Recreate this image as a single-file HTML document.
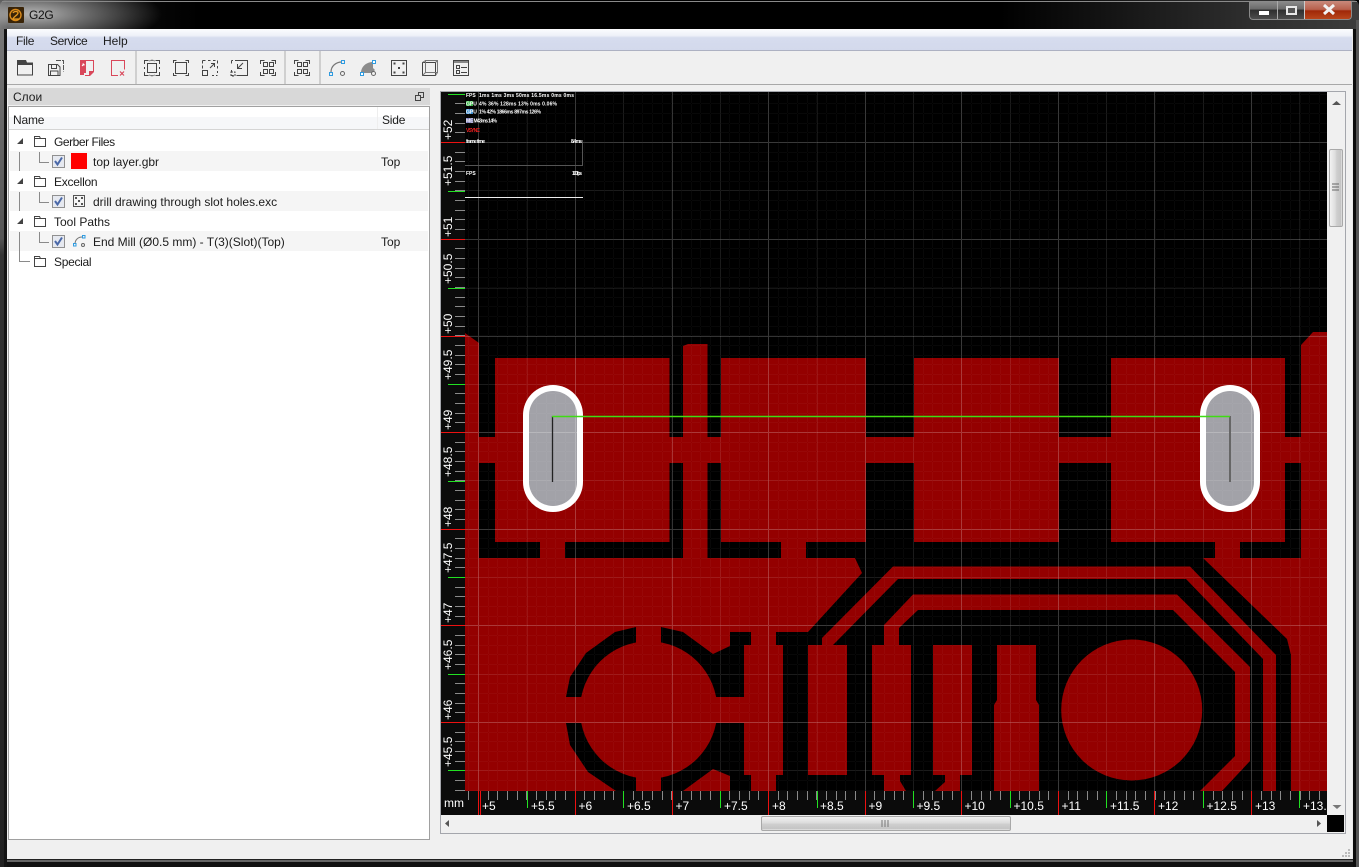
<!DOCTYPE html>
<html><head><meta charset="utf-8"><title>G2G</title>
<style>
html,body{margin:0;padding:0;width:1359px;height:867px;overflow:hidden;background:#000}
body{position:relative;font:12px "Liberation Sans","Noto Sans CJK SC",sans-serif;color:#1c1c1c}
.a{position:absolute}
.t{position:absolute;white-space:nowrap;line-height:14px}
.row{position:absolute;left:10px;width:418px;height:20px;background:#f5f5f5}
</style></head><body>
<div class="a" style="left:0;top:0;width:1359px;height:867px;border-radius:6px 6px 0 0;background:linear-gradient(90deg,#555 0,#2a2a2a 6px,#1a1a1a 7px,#000 200px,#000 1000px,#2e2e2e 1250px,#3c3c3c 1359px)"></div>
<div class="a" style="left:0;top:29px;width:7px;height:838px;background:linear-gradient(180deg,#777 0,#555 25%,#333 27%,#222 100%)"></div>
<div class="a" style="left:4px;top:29px;width:3px;height:838px;background:#141414"></div>
<div class="a" style="left:0;top:0;width:230px;height:29px;background:radial-gradient(ellipse 130px 34px at 32px 14px,rgba(190,190,190,.95) 0,rgba(140,140,140,.75) 40%,rgba(0,0,0,0) 100%)"></div>
<div class="a" style="left:2px;top:1px;width:1355px;height:1px;background:#8a8a8a"></div>
<div class="a" style="left:8px;top:7px;width:16px;height:16px;background:#3a2408;border-radius:1px"></div>
<svg class="a" style="left:8px;top:7px" width="16" height="16"><circle cx="7.500" cy="8" r="5.500" fill="none" stroke="#d98a1c" stroke-width="1.400"/><path d="M5 6c1-2 5-2 5 0 0 2-5 4-5 6h6" fill="none" stroke="#e89a20" stroke-width="1.300"/></svg>
<div class="t" style="left:29px;top:8px;font-size:12px;color:#111;letter-spacing:-.3px">G2G</div>

<!-- caption buttons -->
<div class="a" style="left:1249px;top:1px;width:103px;height:19px;border:1px solid #8a8a8a;border-top:0;border-radius:0 0 4px 4px;box-sizing:border-box;overflow:hidden;background:linear-gradient(180deg,#8d8d8d 0,#6a6a6a 45%,#2f2f2f 50%,#4d4d4d 100%)">
<div class="a" style="left:27px;top:0;width:1px;height:19px;background:#aaa"></div>
<div class="a" style="left:54px;top:0;width:48px;height:19px;border-left:1px solid #ccc;background:linear-gradient(180deg,#c98a7c 0,#b8604c 45%,#a02808 52%,#bc4a1e 100%)"></div>
<div class="a" style="left:9px;top:10px;width:10px;height:4px;background:#fff"></div>
<div class="a" style="left:36px;top:5px;width:11px;height:9px;border:2px solid #e8e8e8;box-sizing:border-box;background:#555"></div>
<svg class="a" style="left:72px;top:3px" width="14" height="12"><path d="M2 1l10 9M12 1L2 10" stroke="#f2f2f2" stroke-width="3" fill="none"/></svg>
</div>

<!-- client -->
<div class="a" style="left:7px;top:29px;width:1345px;height:830px;background:#f0f0f0"></div>
<div class="a" style="left:1352px;top:29px;width:1px;height:831px;background:#e8e8e8"></div>
<div class="a" style="left:1353px;top:29px;width:3px;height:838px;background:#0c0c0c"></div>
<div class="a" style="left:1356px;top:20px;width:3px;height:847px;background:#555"></div>
<div class="a" style="left:7px;top:859px;width:1346px;height:1px;background:#222"></div>
<div class="a" style="left:7px;top:860px;width:1346px;height:2px;background:#666"></div>
<div class="a" style="left:7px;top:862px;width:1346px;height:5px;background:#111"></div>

<!-- menu -->
<div class="a" style="left:7px;top:29px;width:1345px;height:22px;background:linear-gradient(180deg,#fbfcfe 0,#eef1f8 30%,#d6dcee 40%,#d3d9ec 95%,#adb1c2 96%)"></div>
<div class="t" style="left:16px;top:34px;letter-spacing:-.3px">File</div>
<div class="t" style="left:50px;top:34px;letter-spacing:-.4px">Service</div>
<div class="t" style="left:103px;top:34px">Help</div>

<!-- toolbar -->
<div class="a" style="left:7px;top:84px;width:1345px;height:1px;background:#a8a8a8"></div>
<div class="a" style="left:135px;top:51px;width:2px;height:33px;background:#cfcfcf"></div>
<div class="a" style="left:284px;top:51px;width:2px;height:33px;background:#cfcfcf"></div>
<div class="a" style="left:319px;top:51px;width:2px;height:33px;background:#cfcfcf"></div>

<!-- dock -->
<div class="a" style="left:8px;top:88px;width:422px;height:17px;background:#d8d8d8"></div>
<div class="t" style="left:13px;top:90px">Слои</div>
<div class="a" style="left:8px;top:106px;width:420px;height:732px;background:#fff;border:1px solid #a0a0a0"></div>
<div class="a" style="left:9px;top:117px;width:420px;height:12px;background:#f6f7f9"></div>
<div class="a" style="left:9px;top:129px;width:420px;height:1px;background:#d5d5d5"></div>
<div class="a" style="left:377px;top:107px;width:1px;height:22px;background:#eeeeee"></div>
<div class="t" style="left:13px;top:113px;letter-spacing:-.2px">Name</div>
<div class="t" style="left:382px;top:113px;letter-spacing:-.2px">Side</div>
<div class="row" style="top:151px"></div>
<div class="row" style="top:191px"></div>
<div class="row" style="top:231px"></div>
<div class="t" style="left:54px;top:135px;letter-spacing:-.45px">Gerber Files</div>
<div class="t" style="left:93px;top:155px">top layer.gbr</div>
<div class="t" style="left:381px;top:155px">Top</div>
<div class="t" style="left:54px;top:175px;letter-spacing:-.25px">Excellon</div>
<div class="t" style="left:93px;top:195px">drill drawing through slot holes.exc</div>
<div class="t" style="left:54px;top:215px">Tool Paths</div>
<div class="t" style="left:93px;top:235px">End Mill (Ø0.5 mm) - T(3)(Slot)(Top)</div>
<div class="t" style="left:381px;top:235px">Top</div>
<div class="t" style="left:54px;top:255px;letter-spacing:-.3px">Special</div>

<!-- canvas frame -->
<div class="a" style="left:440px;top:91px;width:904px;height:741px;border:1px solid #a4a6ac;background:#f0f0f0"></div>
<div class="a" style="left:441px;top:92px;width:886px;height:723px;overflow:hidden;background:#000">
<svg width="886" height="723" viewBox="441 92 886 723" style="display:block" font-family="Liberation Sans, sans-serif">
<defs>
<pattern id="fine" x="478" y="142" width="29" height="29" patternUnits="userSpaceOnUse"><path d="M0 0h1v29H0zM10 0h1v29h-1zM19 0h1v29h-1zM0 0v1h29V0zM0 10v1h29v-1zM0 19v1h29v-1z" fill="#fff" fill-opacity=".03"/></pattern>
<pattern id="tx" x="478" y="791" width="29" height="9" patternUnits="userSpaceOnUse"><path d="M0 0h1v9H0zM10 0h1v9h-1zM19 0h1v9h-1z" fill="#8a8a8a"/></pattern>
<pattern id="ty" x="455" y="142" width="10" height="29" patternUnits="userSpaceOnUse"><path d="M0 0h10v1H0zM0 10h10v1H0zM0 19h10v1H0z" fill="#8a8a8a"/></pattern>
</defs>
<rect x="441" y="92" width="886" height="723" fill="#000"/>
<g fill="#940000">
<path d="M465 333L479 343V558H465z"/>
<rect x="495" y="358" width="174.500" height="184"/>
<rect x="721" y="358" width="145" height="184"/>
<rect x="914" y="358" width="145" height="184"/>
<rect x="1111" y="358" width="174" height="184"/>
<path d="M683 346L688 344H707.500V558H683z"/>
<rect x="479" y="437" width="16" height="26"/>
<rect x="669" y="437" width="52" height="26"/>
<rect x="866" y="437" width="48" height="26"/>
<rect x="1059" y="437" width="52" height="26"/>
<rect x="1285" y="437" width="16" height="26"/>
<rect x="540" y="542" width="25" height="16"/>
<rect x="781" y="542" width="25" height="16"/>
<rect x="1215" y="542" width="25" height="16"/>
<path d="M1301 345L1313 332H1327V558H1301z"/>
<path d="M465 558H855L862 573L808 632H776V645H783V775H776V791H465z"/>
<path d="M1203 558H1327V791H1291V655L1287 639z"/>
<path d="M893 566.500H1190L1276 655V791H1263V659L1186 579H898L833 645H822V638z"/>
<path d="M913 594.500H1177L1250 667V761L1222 791H1200L1235 756V672L1173 610H918L899 628V645H884V625z"/>
<rect x="808" y="645" width="39" height="130"/>
<path d="M872 645H911V775H900V781L906 791H884V775H872z"/>
<path d="M933 645H972V775H960V791H935L945 782V775H933z"/>
<path d="M997 645H1036V700L1039 705V791H994V705L997 700z"/>
<circle cx="1131.700" cy="710" r="70.500"/>
</g>
<g fill="#000">
<path d="M566 697L570 677L586 653L615 632L636 627V660H661V627L683 632L713 654L730 646V632H751V645H744V697z"/>
<path d="M566 723L570 745L588 772L616 791H683L713 769L730 776V791H751V775H744V723z"/>
</g>
<g fill="#940000">
<circle cx="648.700" cy="710" r="68.700"/>
<rect x="636" y="627" width="25" height="20"/>
<rect x="636" y="773" width="25" height="18"/>
</g>
<g>
<rect x="523" y="385" width="60" height="127" rx="30" fill="#fff"/>
<rect x="529" y="391" width="48" height="115" rx="24" fill="#a2a2a8"/>
<rect x="1200" y="385" width="60" height="127" rx="30" fill="#fff"/>
<rect x="1206" y="391" width="48" height="115" rx="24" fill="#a2a2a8"/>
</g>
<rect x="441" y="92" width="886" height="723" fill="url(#fine)"/>
<path d="M478.500 92V791M575.500 92V791M672.500 92V791M768.500 92V791M865.500 92V791M961.500 92V791M1058.500 92V791M1154.500 92V791M1251.500 92V791M465 142.500H1327M465 239.500H1327M465 336.500H1327M465 432.500H1327M465 529.500H1327M465 625.500H1327M465 722.500H1327" stroke="#fff" stroke-opacity=".2" fill="none"/>
<path d="M527.500 92V791M623.500 92V791M720.500 92V791M817.500 92V791M913.500 92V791M1010.500 92V791M1106.500 92V791M1203.500 92V791M1299.500 92V791M465 190.500H1327M465 288.500H1327M465 384.500H1327M465 480.500H1327M465 577.500H1327M465 674.500H1327M465 770.500H1327" stroke="#fff" stroke-opacity=".08" fill="none"/>
<path d="M552.500 416V482" stroke="#222" stroke-width="1.300"/>
<path d="M1230 416V482" stroke="#666" stroke-width="2"/>
<path d="M552 416.500H1230" stroke="#3fdc14" stroke-width="1.500"/>
<g font-size="5" font-weight="700" fill="#fff">
<text x="466" y="97">FPS</text><text x="479" y="97" textLength="95">1ms  1ms  3ms  50ms  16.5ms   0ms  0ms</text>
<rect x="466" y="101" width="7" height="5" fill="#3bb54a"/><text x="466" y="105.500">GPU</text><text x="479" y="105.500" textLength="78">4%  36%  128ms  13%  0ms 0.06%</text>
<rect x="466" y="109" width="7" height="5" fill="#3f8fd0"/><text x="466" y="113.500">GPU</text><text x="479" y="113.500" textLength="62">1%  42%  1866ms  897ms  126%</text>
<rect x="466" y="118" width="7" height="5" fill="#6d6db0"/><text x="466" y="122.500">MEM</text><text x="477" y="122.500" textLength="20">43ms  14%</text>
<text x="466" y="132" fill="#f02020" textLength="14">VSYNC</text>
<text x="466" y="143" textLength="19">frame time</text><text x="571" y="143" textLength="11">8.4 ms</text>
<text x="466" y="175">FPS</text><text x="572" y="175" textLength="10">100 fps</text>
</g>
<path d="M465 165.500H582.500V140" stroke="#555" fill="none"/>
<path d="M465 197.500H583" stroke="#eee"/>
<rect x="441" y="92" width="24" height="699" fill="#0b0b0b"/>
<rect x="455" y="92" width="10" height="699" fill="url(#ty)"/>
<g fill="#ee1111"><rect x="441" y="142" width="24" height="1"/><rect x="441" y="239" width="24" height="1"/><rect x="441" y="336" width="24" height="1"/><rect x="441" y="432" width="24" height="1"/><rect x="441" y="529" width="24" height="1"/><rect x="441" y="625" width="24" height="1"/><rect x="441" y="722" width="24" height="1"/></g>
<g fill="#22e022"><rect x="448" y="94" width="17" height="1"/><rect x="448" y="191" width="17" height="1"/><rect x="448" y="288" width="17" height="1"/><rect x="448" y="384" width="17" height="1"/><rect x="448" y="481" width="17" height="1"/><rect x="448" y="577" width="17" height="1"/><rect x="448" y="674" width="17" height="1"/><rect x="448" y="770" width="17" height="1"/></g>
<g fill="#fff" font-size="12">
<text transform="translate(452 140) rotate(-90)">+52</text>
<text transform="translate(452 186) rotate(-90)">+51.5</text>
<text transform="translate(452 237) rotate(-90)">+51</text>
<text transform="translate(452 284) rotate(-90)">+50.5</text>
<text transform="translate(452 334) rotate(-90)">+50</text>
<text transform="translate(452 380) rotate(-90)">+49.5</text>
<text transform="translate(452 430) rotate(-90)">+49</text>
<text transform="translate(452 477) rotate(-90)">+48.5</text>
<text transform="translate(452 527) rotate(-90)">+48</text>
<text transform="translate(452 573) rotate(-90)">+47.5</text>
<text transform="translate(452 623) rotate(-90)">+47</text>
<text transform="translate(452 670) rotate(-90)">+46.5</text>
<text transform="translate(452 720) rotate(-90)">+46</text>
<text transform="translate(452 767) rotate(-90)">+45.5</text>
</g>
<rect x="441" y="791" width="886" height="24" fill="#0b0b0b"/>
<rect x="465" y="791" width="862" height="9" fill="url(#tx)"/>
<g fill="#ee1111"><rect x="478" y="791" width="1" height="24"/><rect x="480" y="791" width="1" height="24"/><rect x="575" y="791" width="1" height="24"/><rect x="672" y="791" width="1" height="24"/><rect x="768" y="791" width="1" height="24"/><rect x="865" y="791" width="1" height="24"/><rect x="961" y="791" width="1" height="24"/><rect x="1058" y="791" width="1" height="24"/><rect x="1154" y="791" width="1" height="24"/><rect x="1251" y="791" width="1" height="24"/></g>
<g fill="#22e022"><rect x="527" y="791" width="1" height="17"/><rect x="623" y="791" width="1" height="17"/><rect x="720" y="791" width="1" height="17"/><rect x="817" y="791" width="1" height="17"/><rect x="913" y="791" width="1" height="17"/><rect x="1010" y="791" width="1" height="17"/><rect x="1106" y="791" width="1" height="17"/><rect x="1203" y="791" width="1" height="17"/><rect x="1299" y="791" width="1" height="17"/></g>
<g fill="#fff" font-size="12">
<text x="444" y="807">mm</text>
<text x="482" y="810">+5</text><text x="531" y="810">+5.5</text><text x="578.500" y="810">+6</text><text x="627" y="810">+6.5</text><text x="675.500" y="810">+7</text><text x="724" y="810">+7.5</text><text x="772" y="810">+8</text><text x="820" y="810">+8.5</text><text x="868.500" y="810">+9</text><text x="916.500" y="810">+9.5</text><text x="964.500" y="810">+10</text><text x="1013.500" y="810">+10.5</text><text x="1061.500" y="810">+11</text><text x="1110" y="810">+11.5</text><text x="1158" y="810">+12</text><text x="1206.500" y="810">+12.5</text><text x="1255" y="810">+13</text><text x="1303" y="810">+13.5</text>
</g>
</svg>
</div>
<!-- scrollbars -->
<div class="a" style="left:1327px;top:815px;width:17px;height:17px;background:#000"></div>
<div class="a" style="left:441px;top:815px;width:886px;height:17px;background:#f0f0f0"></div>
<div class="a" style="left:1327px;top:92px;width:17px;height:723px;background:#f0f0f0"></div>
<div class="a" style="left:761px;top:816px;width:250px;height:15px;box-sizing:border-box;border:1px solid #a8a8a8;border-radius:2px;background:linear-gradient(180deg,#f2f2f2 0,#dcdcdc 45%,#cfcfcf 55%,#c4c4c4 90%,#e8e8e8 100%)"></div>
<div class="a" style="left:1329px;top:149px;width:14px;height:78px;box-sizing:border-box;border:1px solid #a8a8a8;border-radius:2px;background:linear-gradient(90deg,#f2f2f2 0,#dcdcdc 45%,#cfcfcf 55%,#c4c4c4 90%,#e8e8e8 100%)"></div>

<!-- icons overlay -->
<svg class="a" style="left:0;top:0" width="1359" height="867" fill="none">
<path d="M1332 105h9l-4.500-4z" fill="#555"/><path d="M1332.500 805h9l-4.500 4z" fill="#777"/>
<path d="M449 820v7l-4-3.500z" fill="#555"/><path d="M1317 820v7l4-3.500z" fill="#555"/>
<path d="M882 820v7M885 820v7M888 820v7" stroke="#777"/>
<path d="M1332 184h7M1332 187h7M1332 190h7" stroke="#666"/>
<path d="M1348 849h2v2h-2zM1345 852h2v2h-2zM1348 852h2v2h-2zM1342 855h2v2h-2zM1345 855h2v2h-2zM1348 855h2v2h-2z" fill="#bbb"/>
<g stroke="#444"><rect x="418.500" y="92.500" width="5" height="5"/><rect x="415.500" y="95.500" width="5" height="5" fill="#d8d8d8"/></g>
<path d="M17 60h9l1 2.500h6V65H17z" fill="#444"/>
<rect x="17.500" y="63.500" width="15" height="11.500" stroke="#444"/>
<path d="M56 60.500h7.500v11" stroke="#555" stroke-dasharray="5 1"/>
<path d="M48.500 64.500h9l2.500 2.500v8.500H48.500z" stroke="#444" fill="#f0f0f0"/>
<path d="M51.500 64.500v4h5v-4M50.500 75.500v-4.500h7.500v4.500" stroke="#444"/>
<path d="M80 60h6v13h-2v2h-4z" fill="#d9475a"/><path d="M86 60.500h7.500v10.500M85 75.500h5" stroke="#d9475a"/><path d="M89 71h5v1l-4 4h-1z" fill="#d9475a"/><path d="M82 66l2-2M84 64h-1.500M84 64v1.500" stroke="#fff"/>
<path d="M118 75.500h-6.500v-15h13v9" stroke="#d9475a"/><path d="M120 71.500l4 4M124 71.500l-4 4" stroke="#d9475a" stroke-width="1.200"/>
<g stroke="#444"><path d="M144.500 64v-3.500h4M155.500 60.500h4v3.500M159.500 72v3.500h-4M148.500 75.500h-4V72"/><rect x="147.500" y="63.500" width="9" height="9" stroke-width="1"/></g>
<path d="M144 67h1v2h-1zM159 67h1v2h-1zM151 60h2v1h-2zM151 75h2v1h-2z" fill="#444"/>
<path d="M149 61l3-1 3 1M149 75l3 1 3-1" stroke="#888"/>
<g stroke="#444"><path d="M173.500 63v-2.500h3M185.500 60.500h3v2.500M188.500 73v2.500h-3M176.500 75.500h-3V73"/><rect x="175.500" y="62.500" width="11" height="11"/></g>
<g stroke="#444"><path d="M208 60.500h2.500M213 60.500h2.500M217.500 60.500v3M217.500 66v2.500M217.500 71v2M212 75.500h2M216 75.500h1.500M202.500 60.500h3M202.500 60.500v3M202.500 65.500v3" /><rect x="202.500" y="70.500" width="5" height="5"/><path d="M210 68l4-4M211 63.500h3.500v3.500"/></g>
<g stroke="#444"><path d="M235 60.500h12.500v15h-11M231.500 60.500h1.500M231.500 60.500v3M231.500 70v2M231.500 75.500h2"/><path d="M243 63l-5 5M237.500 64v4.500h4.500"/><path d="M231 72h4v4h-4z" stroke-dasharray="2 1"/></g>
<g stroke="#444"><path d="M260.500 64v-3.500h4M271.500 60.500h4V64M275.500 72v3.500h-4M264.500 75.500h-4V72"/><rect x="263.500" y="62.500" width="4" height="4"/><rect x="269.500" y="62.500" width="4" height="4"/><rect x="263.500" y="69.500" width="4" height="4"/><rect x="269.500" y="69.500" width="4" height="4"/></g>
<g stroke="#444" transform="translate(34 0)"><path d="M260.500 64v-3.500h4M271.500 60.500h4V64M275.500 72v3.500h-4M264.500 75.500h-4V72"/><rect x="263.500" y="62.500" width="4" height="4"/><rect x="269.500" y="62.500" width="4" height="4"/><rect x="263.500" y="69.500" width="4" height="4"/><rect x="269.500" y="69.500" width="4" height="4"/></g>
<path d="M331 72c0-6 5-10 11-10" stroke="#777" stroke-width="1.200"/>
<rect x="329.500" y="72.500" width="3" height="3" stroke="#2f9be0"/><rect x="341.500" y="60.500" width="3" height="3" stroke="#2f9be0"/><circle cx="342.500" cy="73.500" r="2" stroke="#666"/>
<path d="M361 73c0-6 5-11 12-11v6l2 2-3 3z" fill="#8c8c8c"/>
<rect x="360.500" y="72.500" width="3" height="3" stroke="#2f9be0" fill="#fff"/><rect x="372.500" y="60.500" width="3" height="3" stroke="#2f9be0" fill="#fff"/><circle cx="373.500" cy="73.500" r="2" stroke="#666" fill="#f0f0f0"/>
<rect x="391.500" y="60.500" width="15" height="15" stroke="#444"/>
<g fill="#444"><rect x="393.500" y="62.500" width="2" height="2"/><rect x="402.500" y="62.500" width="2" height="2"/><rect x="398" y="67" width="2" height="2"/><rect x="393.500" y="71.500" width="2" height="2"/><rect x="402.500" y="71.500" width="2" height="2"/></g>
<g stroke="#444"><rect x="422.500" y="62.500" width="13" height="13"/><rect x="425.500" y="60.500" width="12" height="12" stroke="#777"/><path d="M422.500 62.500l3-2M435.500 62.500l2-2M422.500 75.500l3-3M435.500 75.500l2-3" stroke="#777"/></g>
<g stroke="#444"><rect x="453.500" y="60.500" width="15" height="15"/><rect x="456.500" y="65.500" width="3" height="3"/><rect x="456.500" y="70.500" width="3" height="3"/><path d="M461 67.500h6M461 72.500h6"/></g>
<rect x="454" y="61" width="14" height="2" fill="#888"/>
<path d="M19.500 152v19M19.500 192v19M19.500 232v29.500H30M39.500 152v10.500H49M39.500 192v10.500H49M39.500 232v10.500H49" stroke="#8a8a8a"/>
<path d="M23 138v6h-6zM23 178v6h-6zM23 218v6h-6z" fill="#444"/>
<g stroke="#444" fill="#fff">
<path d="M34.500 136.500h5l1 2h5v8h-11zM34.500 138.500h11"/>
<path d="M34.500 176.500h5l1 2h5v8h-11zM34.500 178.500h11"/>
<path d="M34.500 216.500h5l1 2h5v8h-11zM34.500 218.500h11"/>
<path d="M34.500 256.500h5l1 2h5v8h-11zM34.500 258.500h11"/>
</g>
<g stroke="#909090" fill="#e6e9f0"><rect x="52.500" y="155.500" width="12" height="12"/><rect x="52.500" y="195.500" width="12" height="12"/><rect x="52.500" y="235.500" width="12" height="12"/></g>
<g stroke="#4a68a8" stroke-width="2"><path d="M55 161l2.500 3.500L62 157.500"/><path d="M55 201l2.500 3.500L62 197.500"/><path d="M55 241l2.500 3.500L62 237.500"/></g>
<rect x="71" y="153" width="16" height="16" fill="#ff0000"/>
<rect x="73.500" y="195.500" width="11" height="11" stroke="#555"/>
<g fill="#555"><rect x="75" y="197" width="2" height="2"/><rect x="81" y="197" width="2" height="2"/><rect x="78" y="200" width="2" height="2"/><rect x="75" y="203" width="2" height="2"/><rect x="81" y="203" width="2" height="2"/></g>
<path d="M75 244c0-4 3-7 7-7" stroke="#777"/>
<rect x="73.500" y="243.500" width="2.500" height="2.500" stroke="#2f9be0"/><rect x="82.500" y="235.500" width="2.500" height="2.500" stroke="#2f9be0"/><circle cx="83" cy="245" r="1.500" stroke="#666"/>
</svg>
</body></html>
